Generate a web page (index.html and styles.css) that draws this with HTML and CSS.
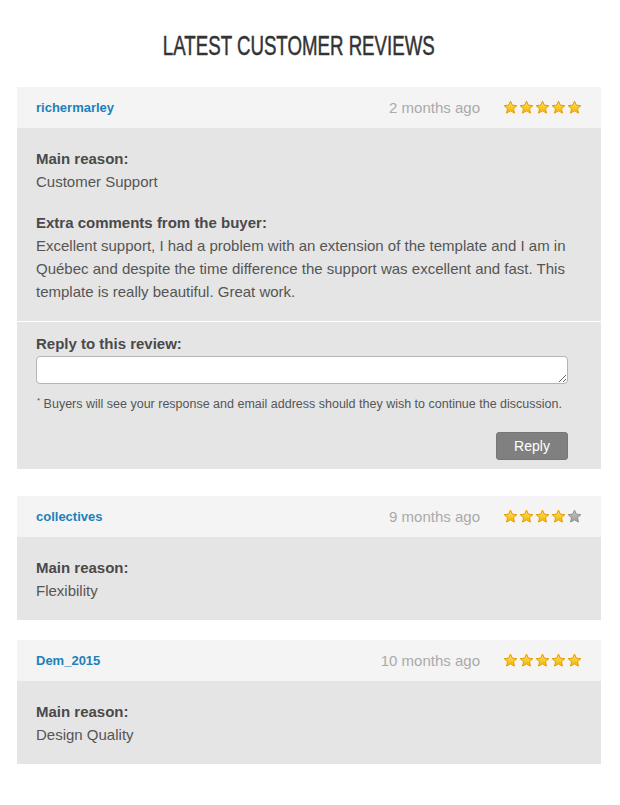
FILE: index.html
```html
<!DOCTYPE html>
<html lang="en">
<head>
    <meta charset="UTF-8">
    <title>Latest Customer Reviews</title>
    <link rel="stylesheet" href="styles.css">
</head>
<body>

    <svg class="defs" width="0" height="0">
        <defs>
            <linearGradient id="gold" x1="0" y1="0" x2="0" y2="1">
                <stop offset="0" stop-color="#ffe25a"/>
                <stop offset="1" stop-color="#f7b500"/>
            </linearGradient>
            <linearGradient id="grey" x1="0" y1="0" x2="0" y2="1">
                <stop offset="0" stop-color="#c8c8c8"/>
                <stop offset="1" stop-color="#9a9a9a"/>
            </linearGradient>
            <symbol id="star" viewBox="0 0 24 24">
                <path d="M12 1.8l3 6.5 7.1.8-5.3 4.8 1.5 7-6.3-3.6-6.3 3.6 1.5-7-5.3-4.8 7.1-.8z"/>
            </symbol>
        </defs>
    </svg>

    <div class="container">
        <h2><span>Latest Customer Reviews</span></h2>

        <!-- review 1 -->
        <div class="review has-reply">
            <div class="review-head">
                <a class="user" href="#">richermarley</a>
                <span class="time">2 months ago</span>
                <div class="stars">
                    <svg class="star on"><use href="#star"/></svg>
                    <svg class="star on"><use href="#star"/></svg>
                    <svg class="star on"><use href="#star"/></svg>
                    <svg class="star on"><use href="#star"/></svg>
                    <svg class="star on"><use href="#star"/></svg>
                </div>
            </div>
            <div class="review-body">
                <div class="block">
                    <div class="label">Main reason:</div>
                    <div class="text">Customer Support</div>
                </div>
                <div class="block">
                    <div class="label">Extra comments from the buyer:</div>
                    <div class="text">Excellent support, I had a problem with an extension of the template and I am in Québec and despite the time difference the support was excellent and fast. This template is really beautiful. Great work.</div>
                </div>
            </div>
            <form class="reply">
                <label>Reply to this review:</label>
                <textarea name="reply"></textarea>
                <p class="note"><sup>*</sup> Buyers will see your response and email address should they wish to continue the discussion.</p>
                <div class="actions">
                    <button type="submit">Reply</button>
                </div>
            </form>
        </div>

        <!-- review 2 -->
        <div class="review">
            <div class="review-head">
                <a class="user" href="#">collectives</a>
                <span class="time">9 months ago</span>
                <div class="stars">
                    <svg class="star on"><use href="#star"/></svg>
                    <svg class="star on"><use href="#star"/></svg>
                    <svg class="star on"><use href="#star"/></svg>
                    <svg class="star on"><use href="#star"/></svg>
                    <svg class="star off"><use href="#star"/></svg>
                </div>
            </div>
            <div class="review-body">
                <div class="block">
                    <div class="label">Main reason:</div>
                    <div class="text">Flexibility</div>
                </div>
            </div>
        </div>

        <!-- review 3 -->
        <div class="review">
            <div class="review-head">
                <a class="user" href="#">Dem_2015</a>
                <span class="time">10 months ago</span>
                <div class="stars">
                    <svg class="star on"><use href="#star"/></svg>
                    <svg class="star on"><use href="#star"/></svg>
                    <svg class="star on"><use href="#star"/></svg>
                    <svg class="star on"><use href="#star"/></svg>
                    <svg class="star on"><use href="#star"/></svg>
                </div>
            </div>
            <div class="review-body">
                <div class="block">
                    <div class="label">Main reason:</div>
                    <div class="text">Design Quality</div>
                </div>
            </div>
        </div>
    </div>

</body>
</html>
```

FILE: styles.css
```css
/* Global Styles */
body {
    font-family: 'Liberation Sans', Arial, sans-serif;
    background-color: #ffffff;
    color: #555555;
    margin: 0;
    padding: 0;
}

.defs {
    position: absolute;
    width: 0;
    height: 0;
}

.container {
    width: 584px;
    margin-left: 17px;
    padding-top: 29px;
}

/* condensed headline: no narrow face installed, so squeeze Arial */
h2 {
    font-family: 'Liberation Sans', Arial, sans-serif;
    font-weight: normal;
    font-size: 28px;
    line-height: 34px;
    text-transform: uppercase;
    color: #333333;
    text-align: center;
    margin: 0 20px 24px 0;
}

h2 span {
    display: inline-block;
    transform: scaleX(0.667);
    -webkit-text-stroke: 0.5px #333333;
}

/* Review card */
.review {
    margin-bottom: 20px;
}

.review.has-reply {
    margin-bottom: 27px;
}

.review-head {
    display: flex;
    align-items: center;
    height: 41px;
    padding: 0 19px;
    background-color: #f4f4f4;
}

.user {
    flex: 1;
    color: #1d80b9;
    font-size: 13px;
    font-weight: bold;
    text-decoration: none;
}

.time {
    color: #aaaaaa;
    font-size: 15px;
    margin-right: 23px;
}

.stars {
    display: flex;
    gap: 1px;
}

.star {
    width: 15px;
    height: 15px;
    stroke-width: 1.6;
    stroke-linejoin: round;
}

.star.on {
    fill: url(#gold);
    stroke: #e39a00;
}

.star.off {
    fill: url(#grey);
    stroke: #8f8f8f;
}

.review-body {
    background-color: #e5e5e5;
    padding: 19px 19px 18px;
    font-size: 15px;
    line-height: 23px;
}

.block + .block {
    margin-top: 18px;
}

.label {
    font-weight: bold;
    color: #4a4a4a;
}

/* Reply form */
.reply {
    background-color: #e5e5e5;
    border-top: 1px solid #ffffff;
    padding: 12px 33px 9px 19px;
    margin: 0;
}

.reply label {
    display: block;
    font-size: 15px;
    line-height: 20px;
    font-weight: bold;
    color: #4a4a4a;
    margin-bottom: 2px;
}

.reply textarea {
    display: block;
    box-sizing: border-box;
    width: 100%;
    height: 28px;
    border: 1px solid #b5b5b5;
    border-radius: 4px;
    background-color: #ffffff;
    resize: vertical;
    margin: 0;
    outline: none;
}

.note {
    font-size: 12.5px;
    line-height: 18px;
    color: #555555;
    margin: 11px 0 0 1px;
}

.note sup {
    font-size: 8px;
    line-height: 0;
}

.actions {
    display: flex;
    justify-content: flex-end;
    margin-top: 19px;
}

button {
    width: 72px;
    height: 28px;
    background-color: #808080;
    color: #ffffff;
    border: 1px solid #767676;
    border-radius: 3px;
    font-family: 'Liberation Sans', Arial, sans-serif;
    font-size: 14px;
    cursor: pointer;
}
```
